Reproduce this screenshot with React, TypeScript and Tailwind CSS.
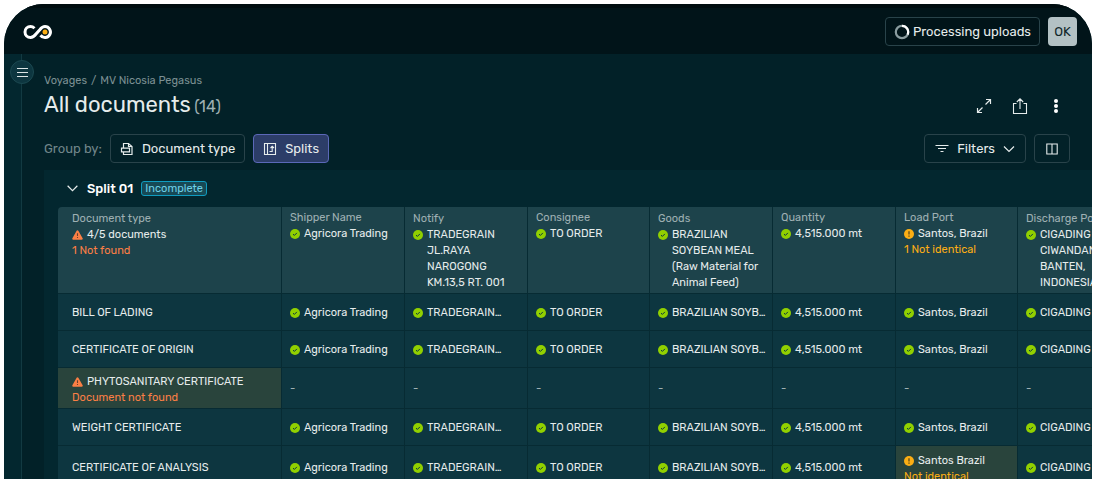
import React from "react";

type Status = "ok" | "warn" | "missing";

function StatusIcon({ status }: { status: Status }) {
  if (status === "missing") {
    return (
      <svg className="h-[10px] w-[11px] shrink-0" viewBox="0 0 22 20" aria-label="Missing">
        <path d="M11 2.500 19.500 17.500H2.500Z" fill="#fb7f45" stroke="#fb7f45" strokeWidth="4" strokeLinejoin="round" />
        <path d="M11 6.500v5.500M11 14v2.200" stroke="#6b3f2e" strokeWidth="2.200" />
      </svg>
    );
  }
  return status === "ok" ? (
    <svg className="size-[10px] shrink-0" viewBox="0 0 20 20" aria-label="Matched">
      <circle cx="10" cy="10" r="10" fill="#91d000" />
      <path d="m6 10.300 2.800 2.500 5-5" fill="none" stroke="#0d3640" strokeWidth="2" />
    </svg>
  ) : (
    <svg className="size-[10px] shrink-0" viewBox="0 0 20 20" aria-label="Warning">
      <circle cx="10" cy="10" r="10" fill="#fcae14" />
      <path d="M10 4.500v6.500M10 13v2.500" stroke="#5c4a1c" strokeWidth="2.600" />
    </svg>
  );
}

const columns: { name: string; lines: string[]; short: string; status?: Status; note?: string; width: string }[] = [
  { name: "Shipper Name", lines: ["Agricora Trading"], short: "Agricora Trading", width: "w-[123px]" },
  { name: "Notify", lines: ["TRADEGRAIN", "JL.RAYA", "NAROGONG", "KM.13,5 RT. 001"], short: "TRADEGRAIN…", width: "w-[123px]" },
  { name: "Consignee", lines: ["TO ORDER"], short: "TO ORDER", width: "w-[122px]" },
  { name: "Goods", lines: ["BRAZILIAN", "SOYBEAN MEAL", "(Raw Material for", "Animal Feed)"], short: "BRAZILIAN SOYB…", width: "w-[123px]" },
  { name: "Quantity", lines: ["4,515.000 mt"], short: "4,515.000 mt", width: "w-[123px]" },
  { name: "Load Port", lines: ["Santos, Brazil"], short: "Santos, Brazil", status: "warn", note: "1 Not identical", width: "w-[122px]" },
  { name: "Discharge Port", lines: ["CIGADING", "CIWANDAN,", "BANTEN,", "INDONESIA"], short: "CIGADING", width: "w-[123px]" },
];

const rows: { name: string; height: string; missing?: boolean; mismatch?: boolean }[] = [
  { name: "BILL OF LADING", height: "h-[37px]" },
  { name: "CERTIFICATE OF ORIGIN", height: "h-[37px]" },
  { name: "PHYTOSANITARY CERTIFICATE", height: "h-[41px]", missing: true },
  { name: "WEIGHT CERTIFICATE", height: "h-[37px]" },
  { name: "CERTIFICATE OF ANALYSIS", height: "h-[43px]", mismatch: true },
];

function Logo() {
  return (
    <svg className="h-[16px] w-[30px]" viewBox="0 0 60 32" fill="none" aria-label="Home">
      <path
        d="M23 8.500C20.500 6 18 5 15 5A11 11 0 0 0 15 27C20 27 23 24 26 20L34 11C37 7 40 5 44 5A11 11 0 1 1 35 22.500"
        stroke="#fff"
        strokeWidth="6"
      />
      <circle cx="44" cy="16" r="5" fill="#fcae14" />
    </svg>
  );
}

const cellBorder = "border-r border-b border-[#072b33]";
const outline = "flex items-center rounded border border-[#29434a]";

function DocumentsTable() {
  return (
    <table className="w-[1083px] table-fixed border-separate border-spacing-0 overflow-hidden rounded-tl text-[11px] leading-4 text-[#e6ecec]">
      <thead>
        <tr className="h-[87px] bg-[#1d434b] text-left align-top">
          <th scope="col" className={`w-[224px] pt-1 pl-[14px] font-normal ${cellBorder}`}>
            <div className="text-[#9fb0b3]">Document type</div>
            <div className="flex items-center gap-1">
              <StatusIcon status="missing" />
              4/5 documents
            </div>
            <div className="text-[#fb7f45]">1 Not found</div>
          </th>
          {columns.map((c) => (
            <th
              key={c.name}
              scope="col"
              className={`${c.width} pl-2 font-normal whitespace-nowrap ${cellBorder} ${c.lines.length > 1 ? "pt-1" : "pt-[3px]"}`}
            >
              <div className="text-[#9fb0b3]">{c.name}</div>
              <div className="flex items-start gap-1">
                <span className="flex h-4 items-center">
                  <StatusIcon status={c.status ?? "ok"} />
                </span>
                <div>
                  {c.lines.map((l) => (
                    <div key={l}>{l}</div>
                  ))}
                </div>
              </div>
              {c.note && <div className="text-[#fcae14]">{c.note}</div>}
            </th>
          ))}
        </tr>
      </thead>
      <tbody>
        {rows.map((r) => (
          <tr key={r.name} className={`${r.height} bg-[#0d3640] align-middle`}>
            <th
              scope="row"
              className={`pl-[14px] text-left font-normal ${cellBorder} ${r.missing ? "bg-[#29443c] pt-1" : "pt-0.5"}`}
            >
              <div className="flex items-center gap-1">
                {r.missing && <StatusIcon status="missing" />}
                {r.name}
              </div>
              {r.missing && <div className="text-[#fb7f45]">Document not found</div>}
            </th>
            {columns.map((c) => {
              const differs = r.mismatch && c.name === "Load Port";
              return (
                <td
                  key={c.name}
                  className={`pl-2 whitespace-nowrap ${cellBorder} ${differs ? "bg-[#29443c] pt-1" : "pt-0.5"}`}
                >
                  {r.missing ? (
                    <span className="text-[#9fb0b3]">-</span>
                  ) : (
                    <div className="flex items-center gap-1">
                      <StatusIcon status={differs ? "warn" : "ok"} />
                      {differs ? "Santos Brazil" : c.short}
                    </div>
                  )}
                  {differs && <div className="text-[#fcae14]">Not identical</div>}
                </td>
              );
            })}
          </tr>
        ))}
      </tbody>
    </table>
  );
}

export default function App() {
  return (
    <div className="h-screen overflow-hidden bg-white px-1 pt-1 font-['Rubik','Roboto',sans-serif] text-[#e6ecec]">
      <div className="flex h-full flex-col overflow-hidden rounded-t-[40px] bg-[#022128]">
        <header className="flex h-[50px] shrink-0 items-center justify-between border-t-4 border-[#000d10] bg-[#011419] pt-px pr-[15px] pl-[19px]">
          <a href="#home">
            <Logo />
          </a>
          <div className="flex items-center gap-2">
            <button className={`${outline} h-[29px] gap-[3px] px-2 text-[13px]`}>
              <svg className="size-4" viewBox="0 0 16 16" fill="none" strokeWidth="2.200">
                <circle cx="8" cy="8" r="6.200" stroke="#8a9c9f" />
                <path d="M8 1.800a6.200 6.200 0 0 1 5.600 8.800" stroke="#fff" />
              </svg>
              Processing uploads
            </button>
            <button className="size-[29px] rounded bg-[#b3c1c4] text-[13px] text-[#10262b]">OK</button>
          </div>
        </header>
        <div className="flex min-h-0 grow">
          <aside className="w-[18px] shrink-0 border-r border-[#123a42] bg-[#03272f] pt-1.5">
            <button aria-label="Menu" className="relative left-1.5 flex size-6 items-center justify-center rounded-full border border-[#1b4850] bg-[#0d3640]">
              <svg className="h-[9px] w-[11px] shrink-0" viewBox="0 0 11 9" stroke="#dce5e6">
                <path d="M0 .5h11M0 4.500h11M0 8.500h11" />
              </svg>
            </button>
          </aside>
          <main className="min-w-0 grow overflow-hidden pt-[18px] pl-[22px]">
            <nav aria-label="Breadcrumb" className="flex gap-1 text-[11px] leading-[18px] text-[#7c9093]">
              <a href="#voyages">Voyages</a>
              <span>/</span>
              <a href="#vessel">MV Nicosia Pegasus</a>
            </nav>
            <div className="flex h-8 items-center justify-between pr-7">
              <h1 className="text-[22px] leading-6">
                All documents <span className="-ml-0.5 text-base text-[#9fb0b3]">(14)</span>
              </h1>
              <div className="flex items-center gap-5">
                <button aria-label="Expand">
                  <svg className="size-4" viewBox="0 0 16 16" fill="none" stroke="#e6ecec" strokeWidth="1.200">
                    <path d="M9.500 6.500 14.500 1.500M10 1.500h4.500V6M6.500 9.500l-5 5M1.500 10v4.500H6" />
                  </svg>
                </button>
                <button aria-label="Share">
                  <svg className="size-4" viewBox="0 0 16 16" fill="none" stroke="#e6ecec" strokeWidth="1.100">
                    <path d="M4.500 5.500h-3v10h13v-10h-3M8 11V.8M4.800 4 8 .8 11.200 4" />
                  </svg>
                </button>
                <button aria-label="More">
                  <svg className="size-4" viewBox="0 0 16 16" fill="#fff">
                    <circle cx="8" cy="3" r="2" />
                    <circle cx="8" cy="8" r="2" />
                    <circle cx="8" cy="13" r="2" />
                  </svg>
                </button>
              </div>
            </div>
            <div className="mt-3 flex items-center gap-2 pr-[22px] text-[13px]">
              <span className="text-[#71868a]">Group by:</span>
              <button className={`${outline} h-[29px] gap-2 px-[9px]`}>
                <svg className="size-[14px]" viewBox="0 0 14 14" fill="none" stroke="#e6ecec" strokeWidth="1.200">
                  <path d="M3.500 6V1.500h5L12 4.500v8H3.500V10M8.500 1.500v3H12M1.500 9.800V6.200h8v3.600z" />
                </svg>
                Document type
              </button>
              <button aria-pressed="true" className="flex h-[29px] items-center gap-2 rounded border border-[#5b68b8] bg-[#2c3d68] px-[9px]">
                <svg className="size-[14px]" viewBox="0 0 14 14" fill="none" stroke="#e6ecec" strokeWidth="1.100">
                  <path d="M1.500 1.500h11v11h-11zM4.500 1.500v11M6.500 9.500h2.700v-5M7.500 6l1.700-1.700L11 6" />
                </svg>
                Splits
              </button>
              <div className="grow" />
              <button className={`${outline} h-[29px] gap-2 px-[10px]`}>
                <svg className="size-[14px]" viewBox="0 0 14 14" stroke="#e6ecec" strokeWidth="1.100">
                  <path d="M.5 3.500h13M3 6.500h8M5.500 9.500h3" />
                </svg>
                Filters
                <svg className="size-[12px]" viewBox="0 0 12 12" fill="none" stroke="#e6ecec" strokeWidth="1.200">
                  <path d="m1 3.500 5 5 5-5" />
                </svg>
              </button>
              <button aria-label="Columns" className={`${outline} h-[29px] w-9 justify-center`}>
                <svg className="size-[12px]" viewBox="0 0 12 12" fill="none" stroke="#e6ecec" strokeWidth="1.100">
                  <path d="M.8 1h10.400v10H.8zM6 1v10" />
                </svg>
              </button>
            </div>
            <section className="mt-[7px] bg-[#03272f] pl-[14px]">
              <div className="flex h-[37px] items-center gap-2 pl-2">
                <button aria-label="Collapse">
                  <svg className="size-[13px]" viewBox="0 0 12 12" fill="none" stroke="#e6ecec" strokeWidth="1.100">
                    <path d="m1.500 3.500 4.500 4.500 4.500-4.500" />
                  </svg>
                </button>
                <h2 className="text-[13px] font-medium text-white">Split 01</h2>
                <span className="rounded-[3px] border border-[#0f9cc0] bg-[#174955] px-[3px] text-[11px] leading-[13px] text-[#6ed0e6]">Incomplete</span>
              </div>
              <DocumentsTable />
            </section>
          </main>
        </div>
      </div>
    </div>
  );
}
